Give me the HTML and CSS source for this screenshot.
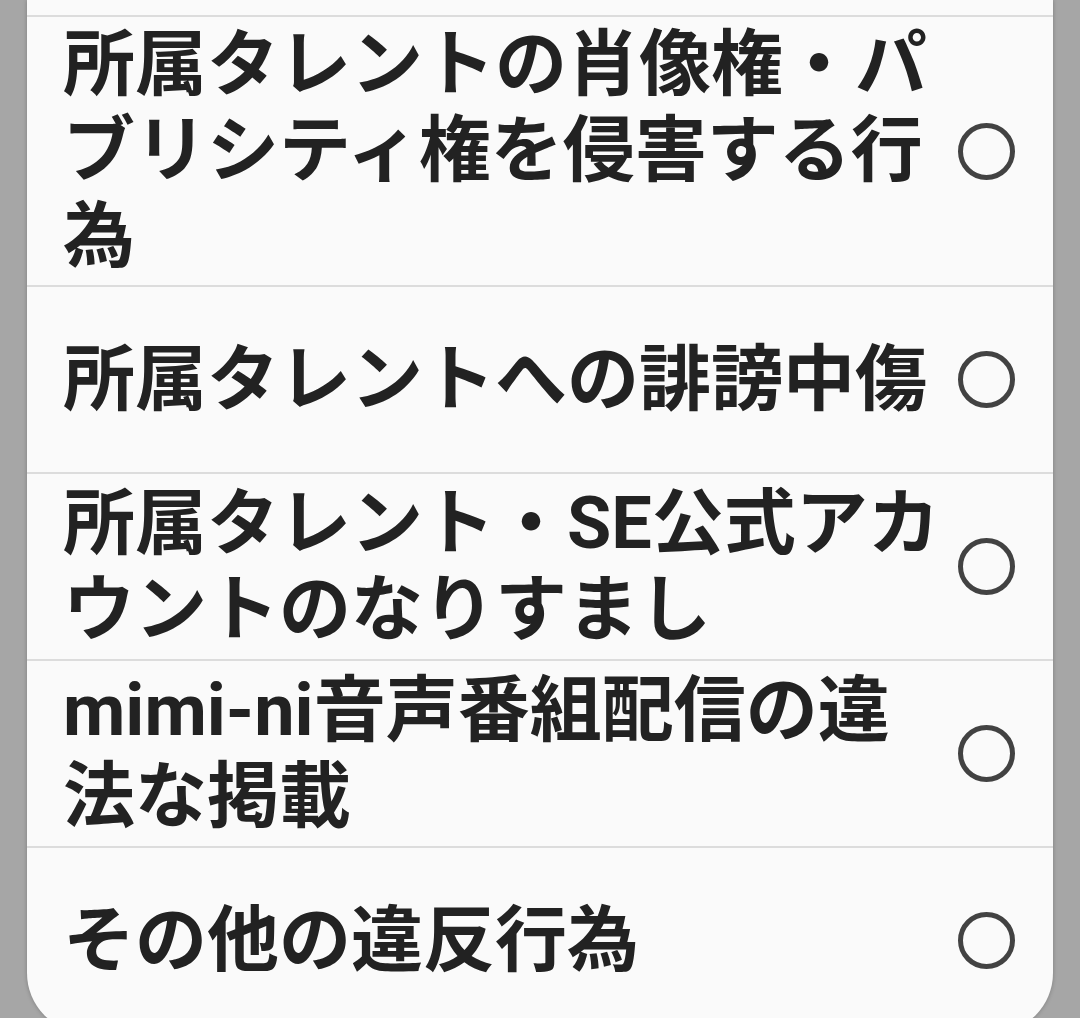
FILE: index.html
```html
<!DOCTYPE html>
<html lang="ja">

<head>
    <meta charset="UTF-8">
    <title>報告理由</title>
    <link rel="stylesheet" href="styles.css">
</head>

<body>

    <div class="sheet">
        <!-- previous item, scrolled out of view -->
        <div class="row-tail"></div>

        <label class="row">
            <span class="label">所属タレントの肖像権・パブリシティ権を侵害する行為</span>
            <span class="radio"></span>
        </label>
        <label class="row">
            <span class="label">所属タレントへの誹謗中傷</span>
            <span class="radio"></span>
        </label>
        <label class="row">
            <span class="label">所属タレント・SE公式アカウントのなりすまし</span>
            <span class="radio"></span>
        </label>
        <label class="row">
            <span class="label">mimi-ni音声番組配信の違法な掲載</span>
            <span class="radio"></span>
        </label>
        <label class="row">
            <span class="label">その他の違反行為</span>
            <span class="radio"></span>
        </label>
    </div>

</body>

</html>
```

FILE: styles.css
```css
* {
    padding: 0;
    margin: 0;
    box-sizing: border-box;
}

body {
    background-color: #a6a6a6;
    font-family: Roboto, "Noto Sans CJK JP", sans-serif;
    overflow: hidden;
}

.sheet {
    width: 1026px;
    margin-left: 27px;
    background-color: #fafafa;
    border-radius: 0 0 60px 60px;
    box-shadow: rgba(0, 0, 0, 0.25) 0px 0px 4px;
}

.row-tail {
    height: 15px;
}

.row {
    display: flex;
    align-items: center;
    min-height: 187px;
    padding: 5px 38px 5px 36px;
    border-top: 2px solid #dcdcdc;
}

.label {
    flex: 1;
    font-size: 72px;
    font-weight: 700;
    line-height: 86px;
    color: #222222;
}

.radio {
    flex: 0 0 57px;
    width: 57px;
    height: 57px;
    margin-left: 10px;
    border: 5px solid #424242;
    border-radius: 50%;
}
```
